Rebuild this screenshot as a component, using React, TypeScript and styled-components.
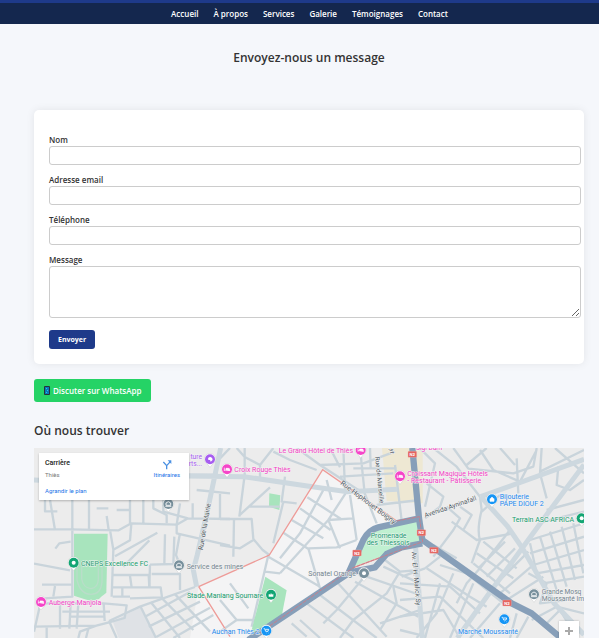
import React from "react";
import styled, { createGlobalStyle } from "styled-components";

const GlobalStyle = createGlobalStyle`
  body {
    margin: 0;
    background: #f5f7fb;
    color: #333;
    font-family: "Open Sans", "Noto Sans", sans-serif;
    font-size: 8px;
  }
`;

const Header = styled.header`
  border-top: 3px solid #1e3a8a;
  background: #14274e;
`;

const NavList = styled.ul`
  display: flex;
  justify-content: center;
  gap: 15px;
  margin: 0;
  padding: 5px 0 4px 20px;
  list-style: none;
  line-height: 12px;
`;

const NavLink = styled.a`
  color: #fff;
  font-weight: 600;
  text-decoration: none;
`;

const Main = styled.main`
  padding: 25px 15px 0 34px;
`;

const Title = styled.h2`
  margin: 0 0 43px;
  font-size: 12px;
  font-weight: 600;
  line-height: 18px;
  text-align: center;
`;

const Subtitle = styled.h2`
  margin: 20px 0 8px;
  font-size: 12px;
  font-weight: 600;
  line-height: 18px;
`;

const FormCard = styled.form`
  padding: 23px 15px 15px;
  border-radius: 5px;
  background: #fff;
  box-shadow: 0 0 8px rgba(0, 0, 0, 0.08);
`;

const Label = styled.label`
  display: block;
  font-size: 8px;
  font-weight: 600;
  line-height: 13px;
`;

const Input = styled.input`
  display: block;
  width: 100%;
  height: 9px;
  margin: 0 0 8px;
  padding: 4px 5px;
  border: 1px solid #ccc;
  border-radius: 3px;
  background: #fff;
  font: inherit;
`;

const TextArea = styled.textarea`
  display: block;
  width: 100%;
  height: 40px;
  margin: 0 0 12px;
  padding: 5px;
  border: 1px solid #ccc;
  border-radius: 3px;
  background: #fff;
  font: inherit;
`;

const SubmitButton = styled.button`
  display: block;
  padding: 4px 9px;
  border: 0;
  border-radius: 3px;
  background: #1e3a8a;
  color: #fff;
  font-family: "Open Sans", sans-serif;
  font-size: 7px;
  font-weight: 700;
  line-height: 11px;
`;

const WhatsAppLink = styled.a`
  display: inline-flex;
  align-items: center;
  gap: 3px;
  margin-top: 15px;
  padding: 5px 10px;
  border-radius: 3px;
  background: #25d366;
  color: #fff;
  font-weight: 600;
  line-height: 13px;
  text-decoration: none;
`;

const WhatsAppRow = styled.div`
  display: flex;
`;

const MapFrame = styled.section`
  position: relative;
  overflow: hidden;
  font-family: Roboto, sans-serif;
`;

const MapDrawing = styled.svg`
  display: block;
  width: 100%;
  height: 190px;
`;

const PlaceCard = styled.div`
  position: absolute;
  top: 5px;
  left: 5px;
  display: flex;
  justify-content: space-between;
  width: 135px;
  padding: 5px 9px 4px 6px;
  background: #fff;
  box-shadow: 0 1px 2px rgba(0, 0, 0, 0.25);
  font-size: 6px;
`;

const PlaceInfo = styled.div`
  display: flex;
  flex-direction: column;
`;

const PlaceName = styled.strong`
  color: #222;
  font-size: 7px;
  font-weight: 500;
  line-height: 10px;
`;

const PlaceAddress = styled.span`
  margin-bottom: 5px;
  color: #777;
  line-height: 13px;
`;

const MapLink = styled.a`
  color: #1a73e8;
  line-height: 10px;
  text-decoration: none;
`;

const Directions = styled(MapLink)`
  display: flex;
  flex-direction: column;
  align-items: center;
  padding-top: 1px;
`;

const ZoomButton = styled.button`
  position: absolute;
  right: 5px;
  bottom: 0;
  display: flex;
  align-items: center;
  justify-content: center;
  width: 20px;
  height: 17px;
  padding: 3px 0 0;
  border: 0;
  background: #fff;
  box-shadow: 0 0 2px rgba(0, 0, 0, 0.25);
`;

type Kind = "hotel" | "shop" | "bag" | "place" | "park" | "dot" | "tree" | "art";

const pinColors: Record<Kind, string> = {
  hotel: "#f545c8",
  shop: "#1695f5",
  bag: "#1695f5",
  place: "#78909c",
  park: "#12a573",
  dot: "#78909c",
  tree: "#12a573",
  art: "#a75df0",
};

function Pin({ x, y, kind }: { x: number; y: number; kind: Kind }) {
  return (
    <g transform={`translate(${x} ${y})`}>
      <path d="M0 24 L-8 14 A17 17 0 1 1 8 14 Z" fill="#fff" stroke="#bbb" strokeWidth="1" />
      <circle r="15" fill={pinColors[kind]} />
      {kind === "hotel" && <path d="M-8 5V-5M-8 2H8V5M-3-3h7q4 0 4 4H-3Z" fill="#fff" stroke="#fff" strokeWidth="2" />}
      {kind === "shop" && <path d="M-8-6h3l3 8h7l2-6H-3M-1 7h1M5 7h1" fill="none" stroke="#fff" strokeWidth="2.5" />}
      {kind === "bag" && <path d="M-6-2H6V6H-6ZM-3-2v-2q3-5 6 0v2" fill="#fff" stroke="#fff" strokeWidth="2" />}
      {kind === "place" && <path d="M-7 4V-3l7-4 7 4V4ZM-9 7H9" fill="none" stroke="#fff" strokeWidth="2.5" />}
      {(kind === "park" || kind === "dot") && <circle r="6" fill="#fff" />}
      {kind === "tree" && <path d="M-7 6V-1h4v3l3-7 3 5 4-3V6Z" fill="#fff" />}
      {kind === "art" && <path d="M-5-5Q1-10 6-4T2 7L0 2Q-8 3-5-5Z" fill="#fff" />}
    </g>
  );
}

function Shield({ x, y }: { x: number; y: number }) {
  return (
    <g transform={`translate(${x} ${y})`}>
      <rect x="-13" y="-9" width="26" height="18" rx="2" fill="#e5645f" stroke="#f3b5b2" />
      <text y="5" textAnchor="middle" fontSize="13" fontWeight="700" fill="#fff" stroke="none">N2</text>
    </g>
  );
}

const colors = { pink: "#f23fc4", green: "#159b6c", blue: "#2188ee", grey: "#71838d", road: "#505a63", violet: "#a75df0" };

function Place({ x, y, color, size = 20, end = false, turn = 0, children }: {
  x: number; y: number; color: keyof typeof colors; size?: number; end?: boolean; turn?: number; children: string;
}) {
  return (
    <text
      transform={`translate(${x} ${y}) rotate(${turn})`}
      fontSize={size}
      textAnchor={end ? "end" : "start"}
      fill={colors[color]}
      stroke="#f4f4f4"
      strokeWidth="3"
      paintOrder="stroke"
    >
      {children}
    </text>
  );
}

function TownMap() {
  return (
    <MapDrawing viewBox="0 0 1650 570" preserveAspectRatio="xMidYMid slice" role="img" aria-label="Plan de Thiès">
      <rect width="1650" height="570" fill="#ececec" />

      <g transform="translate(-12 -24)">
        <path d="M248 544L332 502L378 594H266Z" fill="#dfe2e6" />
        <path d="M132 281H233L229 458Q213 470 207 477Q184 486 160 476L132 467Z" fill="#a8e4bd" />
        <path d="M141 378V420Q151 463 183 463Q213 463 216 425V378M155 378V417Q160 444 183 446Q204 444 205 418V378" fill="none" stroke="#b9ddc9" strokeWidth="4" />
      </g>
      <g transform="translate(558 -24)">
        <path d="M308 89L530 243L400 385L90 594H-90L-64 440L148 345Z" fill="#f4f4f5" />
        <path d="M486 24H608V190L500 183Z" fill="#eee8d3" />
        <path d="M148 160L181 166L178 210L147 200Z" fill="#a8e4bd" />
        <path d="M448 272L598 234L606 305L400 380L420 325Z" fill="#c0f0d1" />
      </g>

      <g fill="none" stroke="#c9d4db" strokeWidth="7" strokeLinejoin="round">
        <g transform="translate(-12 -24)">
          <path d="M12 268H122L266 271L304 250L440 254L474 235L600 237M127 180V470L30 476M177 180V270M300 180V250M304 250L300 301L250 329L240 270M250 329L245 470M340 180V250M230 228L236 270M400 180V215L474 235" />
          <path d="M370 180V205L410 225V250M475 104L548 104L600 109M440 254V280L600 317M405 283L403 372M433 290L430 372L360 374M360 374L358 441M450 280L438 345L448 370" />
          <path d="M12 371L120 391M76 326L88 310L122 305M255 349L382 278M280 380L358 301M365 402H450V450M248 405H356L358 442H392L396 472L300 475M300 408L305 442M277 442V472M248 442H358M248 470H300" />
          <path d="M36 434H128M75 438L70 470M20 490H220L290 496L284 534L237 547L199 557L12 560M90 490V566M122 490L118 566M145 488L140 566M30 496L12 575M50 560V594M97 515H240M118 530H220M221 490L224 543M199 557L150 575L145 594M175 566L168 594" />
          <path d="M237 543L330 500L495 441M237 543L260 594M332 500L378 594M362 486L450 594M397 476L490 570M436 464L540 575M345 530L480 456M356 560L510 485M380 590L540 503M430 594L550 525" />
          <path d="M45 180V214H82M60 180L75 270M200 205H235M260 210H300M450 190L440 254M488 190V235M570 155V237M500 150L600 160" />
        </g>

        <g transform="translate(558 -24)">
          <path d="M50 24L74 51L120 75L160 24M74 24V105L58 230M120 75V115M150 142L58 226M86 200H180M30 24L0 55M160 35L210 60L290 90M195 110L185 185L230 190M190 185L160 310M0 237L95 237L100 297L128 330L148 345M42 237L40 350M0 315L60 325L100 300" />
          <path d="M262 172L362 236M240 205L332 270M215 240L310 295M190 278L270 330M320 120L335 180M380 155L325 240L180 400M325 240L360 325M265 325L300 445M265 325L350 322L410 300M325 240L400 235M390 165L410 300M145 350L300 440M180 355L240 280L310 150" />
          <path d="M230 24L300 75L415 150M300 75L430 70L525 35M330 24L360 82M370 24L375 150M420 24L433 150M450 24L452 85M400 85H530M360 110L520 100M390 155L530 145M525 75L545 243M470 195L600 180M474 90L480 190M430 150L470 250" />
          <path d="M30 430L85 505M0 480L50 540L0 575M50 540H120M145 345L95 560M180 400L135 395M240 540L300 594M260 490L400 594M300 465L470 594M350 425L500 590M405 425L595 530M440 410L600 465M490 380L600 430M495 360L540 395L600 390M540 395L500 460L400 540L360 594M450 390L350 510L310 550M520 440L530 490L480 570M600 510L480 550M215 550L260 590" />
        </g>

        <g transform="translate(1098 -24)">
          <path d="M60 25L105 70L75 200M100 24L170 80L240 170M160 24L205 86L340 100L400 80L410 24M200 75L260 24M240 30L280 90L360 125L410 30M350 55L355 160M345 75L300 24M425 24L420 100L440 175M420 95L552 30M465 24L552 100M475 80L470 135L510 150L552 120" />
          <path d="M75 235L120 200L130 170L80 130M140 200L180 235L160 270L100 350M155 245L230 300L340 280M190 270L215 225L180 200M240 170L245 210Q230 270 240 300L215 370M245 215L300 165M100 315L170 355M75 385L120 350M75 385L5 410" />
          <path d="M250 305L350 385M230 340L340 415M220 370L330 460M235 385L315 305M260 410L345 325M280 440L385 335M300 460L405 370M320 480L430 410M330 270L295 315L240 385L200 430L170 490" />
          <path d="M390 300L552 250M390 340L552 290M400 375L552 330M410 400L552 375M430 430L552 410M420 290L470 450M450 275L500 440M485 260L525 420M520 250L550 400M430 245L552 215M440 210L552 180M390 310L410 400M385 400L440 430L420 490L500 480" />
          <path d="M120 375L200 400L310 490M80 385L210 470L260 500M0 430L150 440L240 520M0 480L120 470L250 594M120 430L75 594M160 400L110 520L50 594M220 430L150 594M0 530L130 510L180 594M0 570L80 590M300 490L210 594M350 520L330 594M385 530L350 594M395 540L470 500L552 520M440 550L480 510L530 594" />
        </g>
      </g>

      <path d="M694 386L758 427L742 510L668 564L653 546Z" fill="#a8e4bd" />

      <g fill="none" stroke="#cdd8df" strokeWidth="15">
        <path d="M560 0L520 190L490 320L478 366L488 416M0 96L90 100M458 84L630 86L820 114L940 131L1090 124" />
        <path d="M1340 146L1650 34M1340 146L1420 234L1465 300L1560 466L1650 560M1650 50L1560 170L1465 300L1370 430L1270 570M1145 300L1165 570" />
      </g>

      <g transform="translate(558 -24)" fill="none">
        <path d="M-64 440L148 345L308 89L530 243L598 230L608 305L400 383L90 594M-64 440L30 590" stroke="#ee9b98" strokeWidth="4" />
        <g stroke="#879fb9" strokeWidth="19" strokeLinejoin="round">
          <path d="M85 600L220 510L385 400L430 300Q445 270 475 262L597 235M577 24L597 235L607 300L650 330L875 490L935 520L1030 600" />
          <path d="M607 310L545 322L500 342L465 382L390 397" />
        </g>
        <path d="M530 243L598 230L608 305L400 383L120 578" stroke="#c77f8b" strokeWidth="3" strokeDasharray="12 3" />
      </g>

      <g transform="translate(-12 -24)">
        <Pin x={540} y={58} kind="art" />
        <Place x={516} y={56} color="violet" end>ture</Place>
        <Place x={516} y={79} color="violet" end>rts...</Place>
        <Pin x={415} y={192} kind="place" />
        <Pin x={131} y={368} kind="park" />
        <Place x={153} y={378} color="green" size={21}>CNEPS Excellence FC</Place>
        <Pin x={33} y={486} kind="hotel" />
        <Place x={56} y={495} color="pink" size={21}>Auberge Manjola</Place>
        <Pin x={447} y={376} kind="place" />
        <Place x={470} y={386} color="grey" size={21}>Service des mines</Place>
        <Place x={518} y={331} color="road" turn={-80}>Rue de la Mairie</Place>
      </g>

      <g transform="translate(558 -24)">
        <Pin x={21} y={88} kind="hotel" />
        <Place x={43} y={97} color="pink" size={21}>Croix Rouge Thiès</Place>
        <Pin x={422} y={30} kind="hotel" />
        <Place x={399} y={40} color="pink" size={21} end>Le Grand Hôtel de Thiès</Place>
        <Place x={360} y={132} color="road" size={21} turn={37}>Rue Hophouet Boigny</Place>
        <Place x={465} y={51} color="road" size={19} turn={84}>Rue de Marseille</Place>
        <Place x={510} y={26} color="road" size={19} turn={88}>yt</Place>
        <Place x={452} y={293} color="green" size={21}>Promenade</Place>
        <Place x={440} y={314} color="green" size={21}>des Thiessois</Place>
        <Pin x={432} y={400} kind="dot" />
        <Place x={408} y={409} color="grey" size={21} end>Sonatel Orange</Place>
        <Pin x={153} y={464} kind="tree" />
        <Place x={130} y={474} color="green" size={21} end>Stade Maniang Soumare</Place>
        <Pin x={139} y={572} kind="shop" />
        <Place x={119} y={582} color="blue" size={21} end>Auchan Thiès 2</Place>
        <Place x={575} y={336} color="road" size={20} turn={85}>Av. El H. Malick Sy</Place>
        <Shield x={411} y={339} />
        <Shield x={577} y={43} />
        <Shield x={604} y={278} />
      </g>

      <g transform="translate(1098 -24)">
        <Pin x={0} y={109} kind="hotel" />
        <Place x={22} y={107} color="pink" size={21}>Croissant Magique Hôtels</Place>
        <Place x={22} y={129} color="pink" size={21}>- Restaurant - Pâtisserie</Place>
        <Place x={48} y={29} color="pink">Sigi Bam</Place>
        <Place x={76} y={233} color="road" turn={-19}>Avenida Ayninafall</Place>
        <Pin x={276} y={178} kind="bag" />
        <Place x={299} y={176} color="blue" size={21}>Bijouterie</Place>
        <Place x={299} y={197} color="blue" size={21}>PAPE DIOUF 2</Place>
        <Pin x={545} y={235} kind="park" />
        <Place x={522} y={245} color="green" size={21} end>Terrain ASC AFRICA</Place>
        <Pin x={402} y={463} kind="place" />
        <Place x={425} y={461} color="grey">Grande Mosq</Place>
        <Place x={425} y={483} color="grey">Moussanté Im</Place>
        <Pin x={313} y={538} kind="shop" />
        <Place x={174} y={583} color="blue" size={21}>Marché Moussanté</Place>
        <Shield x={102} y={331} />
        <Shield x={321} y={489} />
      </g>
    </MapDrawing>
  );
}

const navItems = ["Accueil", "À propos", "Services", "Galerie", "Témoignages", "Contact"];
const textFields = [
  { id: "nom", label: "Nom", type: "text" },
  { id: "email", label: "Adresse email", type: "email" },
  { id: "telephone", label: "Téléphone", type: "tel" },
];

export default function App() {
  return (
    <>
      <GlobalStyle />
      <Header>
        <nav>
          <NavList>
            {navItems.map((item) => (
              <li key={item}>
                <NavLink href="#">{item}</NavLink>
              </li>
            ))}
          </NavList>
        </nav>
      </Header>
      <Main>
        <Title>Envoyez-nous un message</Title>
        <FormCard>
          {textFields.map(({ id, label, type }) => (
            <React.Fragment key={id}>
              <Label htmlFor={id}>{label}</Label>
              <Input id={id} type={type} />
            </React.Fragment>
          ))}
          <Label htmlFor="message">Message</Label>
          <TextArea id="message" />
          <SubmitButton type="button">Envoyer</SubmitButton>
        </FormCard>
        <WhatsAppRow>
          <WhatsAppLink href="#">
            <svg width="6" height="9" viewBox="0 0 6 9" aria-hidden="true">
              <rect width="6" height="9" rx="1" fill="#25333b" />
              <rect x="1" y="1" width="4" height="7" fill="#0879b8" />
              <path d="M2 2h1v1H2zM3 4h1v1H3zM2 6h1v1H2z" fill="#27c2ee" />
            </svg>
            Discuter sur WhatsApp
          </WhatsAppLink>
        </WhatsAppRow>
        <Subtitle>Où nous trouver</Subtitle>
        <MapFrame>
          <TownMap />
          <PlaceCard>
            <PlaceInfo>
              <PlaceName>Carrière</PlaceName>
              <PlaceAddress>Thiès</PlaceAddress>
              <MapLink href="#">Agrandir le plan</MapLink>
            </PlaceInfo>
            <Directions href="#">
              <svg width="10" height="11" viewBox="0 0 30 33" fill="none" stroke="#4a90e2" strokeWidth="4" aria-hidden="true">
                <path d="M14 31V20L4 9M14 20L25 8" />
                <path d="M17 4H28V15Z" fill="#4a90e2" stroke="none" />
              </svg>
              Itinéraires
            </Directions>
          </PlaceCard>
          <ZoomButton type="button" aria-label="Zoom avant">
            <svg width="8" height="8" viewBox="0 0 8 8" aria-hidden="true">
              <path d="M3 0h2v3h3v2H5v3H3V5H0V3h3z" fill="#aaa" />
            </svg>
          </ZoomButton>
        </MapFrame>
      </Main>
    </>
  );
}
